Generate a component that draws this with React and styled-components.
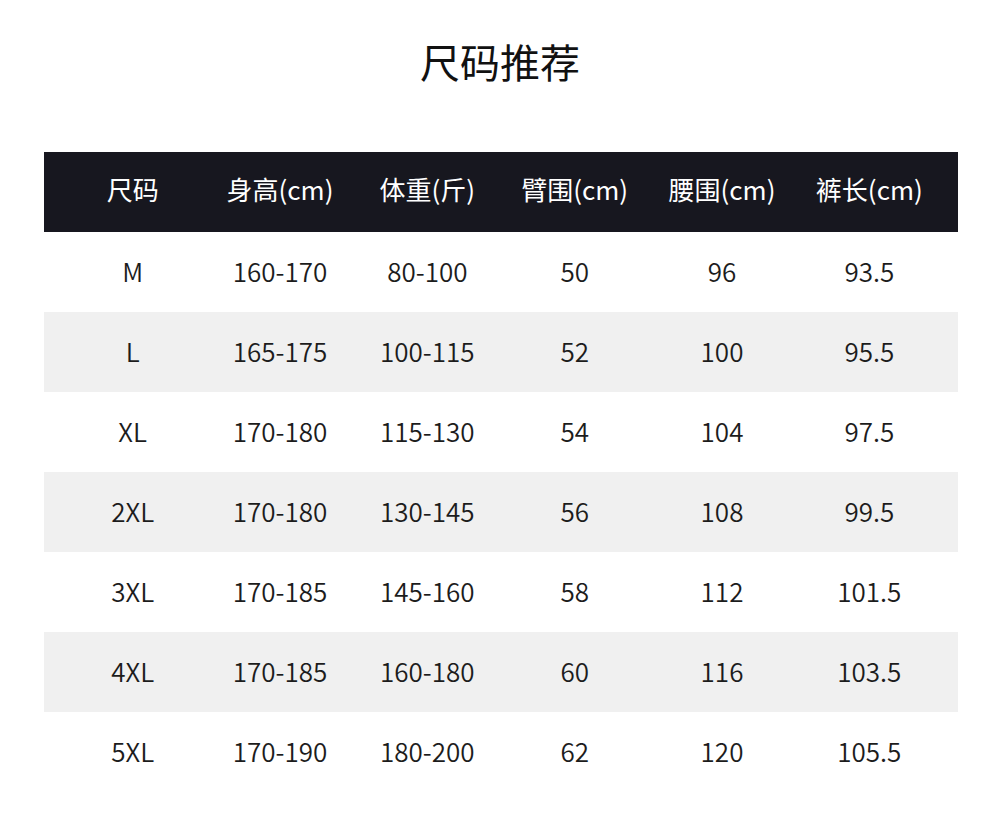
import React from "react";
import styled, { createGlobalStyle } from "styled-components";

const GlobalStyle = createGlobalStyle`
  html, body {
    margin: 0;
    padding: 0;
    background: #ffffff;
  }
  body {
    font-family: "Noto Sans CJK SC", "Noto Sans", sans-serif;
    color: #1c1c1c;
  }
`;

const HEADERS = ["尺码", "身高(cm)", "体重(斤)", "臂围(cm)", "腰围(cm)", "裤长(cm)"];

const ROWS = [
  ["M", "160-170", "80-100", "50", "96", "93.5"],
  ["L", "165-175", "100-115", "52", "100", "95.5"],
  ["XL", "170-180", "115-130", "54", "104", "97.5"],
  ["2XL", "170-180", "130-145", "56", "108", "99.5"],
  ["3XL", "170-185", "145-160", "58", "112", "101.5"],
  ["4XL", "170-185", "160-180", "60", "116", "103.5"],
  ["5XL", "170-190", "180-200", "62", "120", "105.5"],
];

const Page = styled.main`
  width: 1000px;
  height: 833px;
  display: flex;
  flex-direction: column;
`;

const Title = styled.h1`
  margin: 0;
  padding-top: 41px;
  height: 111px;
  font-size: 40px;
  line-height: 40px;
  font-weight: 400;
  color: #111111;
  text-align: center;
`;

const Table = styled.section`
  width: 914px;
  margin-left: 44px;
  display: flex;
  flex-direction: column;
`;

const Row = styled.div`
  display: grid;
  grid-template-columns: repeat(6, 1fr);
  padding: 0 15px;
  height: 80px;
  align-items: center;
  background: ${(p) => (p.$head ? "#17171f" : p.$shade ? "#f0f0f0" : "#ffffff")};
  color: ${(p) => (p.$head ? "#ffffff" : "#1c1c1c")};
`;

const Cell = styled.div`
  text-align: center;
  font-size: 26px;
  line-height: 1;
  font-weight: 350;
  white-space: nowrap;
  padding-bottom: 2px;
`;

const HeadCell = styled(Cell)`
  font-weight: 400;
  padding-bottom: 7px;
`;

export default function App() {
  return (
    <Page>
      <GlobalStyle />
      <Title>尺码推荐</Title>
      <Table>
        <Row $head>
          {HEADERS.map((h) => (
            <HeadCell key={h}>{h}</HeadCell>
          ))}
        </Row>
        {ROWS.map((r, i) => (
          <Row key={r[0]} $shade={i % 2 === 1}>
            {r.map((v, j) => (
              <Cell key={j}>{v}</Cell>
            ))}
          </Row>
        ))}
      </Table>
    </Page>
  );
}
